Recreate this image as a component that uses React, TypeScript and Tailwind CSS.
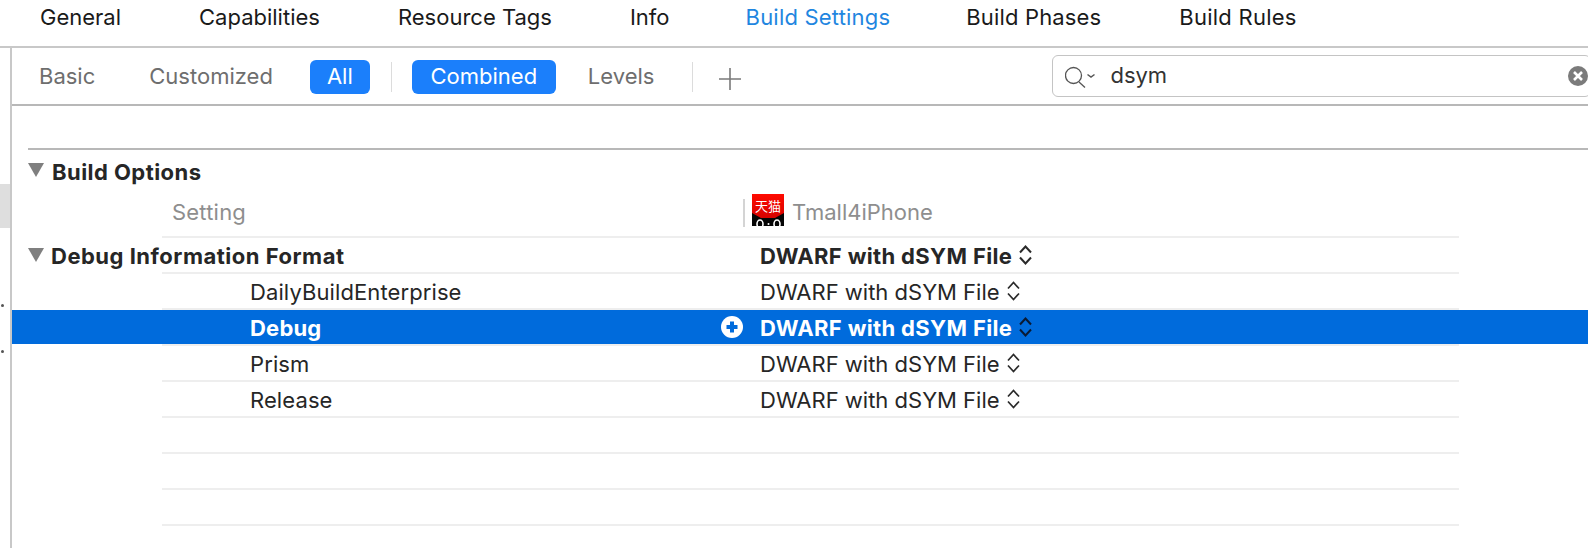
const font = { fontFamily: 'Inter, "Noto Sans CJK SC", sans-serif' };

function Chevrons({ white = false, bold = false }: { white?: boolean; bold?: boolean }) {
  return (
    <svg width="13" height="20" viewBox="0 0 13 20" fill="none" stroke={white ? "#0a1a33" : "#2a2a2a"} strokeWidth={bold ? 2 : 1.7} className="ml-[7px] shrink-0">
      <path d="M1 7.5 6.5 1.5 12 7.5" />
      <path d="M1 12.5 6.5 18.5 12 12.5" />
    </svg>
  );
}

function Tri() {
  return (
    <svg width="16" height="14" viewBox="0 0 16 14" className="shrink-0">
      <path d="M0 0H16L8 14Z" fill="#7f7f7f" />
    </svg>
  );
}

function Line() {
  return <div className="ml-[150px] h-[2px] w-[1297px] bg-[#eeeeee]" />;
}

function Row({ name }: { name: string }) {
  return (
    <>
      <div className="flex h-[34px] items-center text-[#262626]">
        <div className="w-[748px] pl-[238px] pt-[2px] tracking-[0.1px]">{name}</div>
        <span className="pt-[2px]">DWARF with dSYM File</span>
        <Chevrons />
      </div>
      <Line />
    </>
  );
}

export default function App() {
  return (
    <div className="flex h-[548px] w-[1588px] flex-col overflow-hidden bg-white text-[22px] leading-none" style={font}>
      <div className="flex h-[46px] shrink-0 items-center gap-[78px] pb-[12px] pl-[40px] text-[#1a1a1a]">
        <span>General</span>
        <span>Capabilities</span>
        <span>Resource Tags</span>
        <span>Info</span>
        <span className="-ml-[2px] -mr-[2px] tracking-[0.2px] text-[#1f86e0]">Build Settings</span>
        <span className="tracking-[0.15px]">Build Phases</span>
        <span className="tracking-[0.25px]">Build Rules</span>
      </div>
      <div className="h-[2px] shrink-0 bg-[#c8c8c8]" />
      <div className="flex min-h-0 flex-1">
        <div className="flex w-[10px] shrink-0 flex-col">
          <div className="mt-[136px] h-[44px] bg-[#dedede]" />
          <div className="ml-[1px] mt-[76px] h-[3px] w-[3px] rounded-full bg-[#555555]" />
          <div className="ml-[1px] mt-[43px] h-[3px] w-[3px] rounded-full bg-[#555555]" />
        </div>
        <div className="w-[2px] shrink-0 bg-[#c8c8c8]" />
        <div className="min-w-0 flex-1">
          <div className="flex h-[58px] items-center border-b-2 border-[#b8b8b8] pt-[2px] text-[#6e6e6e]">
            <span className="mb-[2px] ml-[27px] shrink-0">Basic</span>
            <span className="mb-[2px] ml-[54px] shrink-0">Customized</span>
            <span className="ml-[37px] flex h-[34px] w-[60px] shrink-0 items-center justify-center rounded-[6px] bg-[#1b7ffb] pb-[2px] text-white">All</span>
            <div className="ml-[21px] h-[30px] w-[1px] shrink-0 bg-[#dcdcdc]" />
            <span className="ml-[20px] flex h-[34px] w-[144px] shrink-0 items-center justify-center rounded-[6px] bg-[#1b7ffb] pb-[2px] text-white">Combined</span>
            <span className="mb-[2px] ml-[32px] shrink-0">Levels</span>
            <div className="ml-[38px] h-[30px] w-[1px] shrink-0 bg-[#dcdcdc]" />
            <svg width="24" height="24" viewBox="0 0 24 24" stroke="#7a7a7a" strokeWidth="1.6" className="ml-[25px] mt-[4px] shrink-0">
              <path d="M12 1V23M1 12H23" />
            </svg>
            <div className="mb-[2px] ml-[310px] flex h-[42px] w-[539px] shrink-0 items-center rounded-[6px] border border-[#c4c4c4] pl-[12px] text-[#333333]">
              <svg width="30" height="24" viewBox="0 0 30 24" fill="none" stroke="#555555" strokeWidth="1.3" className="shrink-0">
                <circle cx="8.5" cy="11.5" r="8" />
                <path d="M14 18 20 23.5" />
                <path d="M22.5 10.5 26 13 29.5 10.5" strokeWidth="1.5" />
              </svg>
              <span className="ml-[15px] pb-[2px]">dsym</span>
              <svg width="20" height="20" viewBox="0 0 20 20" className="ml-auto mr-[2px] shrink-0">
                <circle cx="10" cy="10" r="10" fill="#7b7b7b" />
                <path d="M6 6 14 14M14 6 6 14" stroke="white" strokeWidth="2.6" />
              </svg>
            </div>
          </div>
          <div className="ml-[16px] mt-[42px] h-[2px] bg-[#b8b8b8]" />
          <div className="flex h-[40px] items-center pt-[4px] font-bold tracking-[0.45px] text-[#262626]">
            <div className="mb-[4px] ml-[16px]"><Tri /></div>
            <span className="ml-[8px]">Build Options</span>
          </div>
          <div className="flex h-[46px] items-center text-[#8e8e8e]">
            <div className="w-[731px] pb-[2px] pl-[160px] tracking-[0.2px]">Setting</div>
            <div className="h-[28px] w-[2px] bg-[#d4d4d4]" />
            <svg width="32" height="32" viewBox="0 0 32 32" className="mb-[6px] ml-[7px] shrink-0">
              <defs>
                <linearGradient id="tm" x1="0" y1="0" x2="0" y2="1">
                  <stop offset="0" stopColor="#ff0a00" />
                  <stop offset="1" stopColor="#c80000" />
                </linearGradient>
              </defs>
              <rect width="32" height="32" fill="url(#tm)" />
              <path d="M0 32V19L9 24H23L32 19V32Z" fill="#050505" />
              <text x="16" y="16.5" textAnchor="middle" fontSize="13" fill="white" style={font}>天猫</text>
              <ellipse cx="8" cy="30" rx="3" ry="4" fill="none" stroke="white" strokeWidth="1.6" />
              <ellipse cx="25" cy="30" rx="3" ry="4" fill="none" stroke="white" strokeWidth="1.6" />
              <circle cx="16.5" cy="30" r="1" fill="white" />
            </svg>
            <span className="ml-[8px] pb-[2px]">Tmall4iPhone</span>
          </div>
          <Line />
          <div className="flex h-[34px] items-center font-bold text-[#262626]">
            <div className="flex w-[748px] items-center">
              <div className="ml-[16px]"><Tri /></div>
              <span className="ml-[7px] pt-[2px] tracking-[0.5px]">Debug Information Format</span>
            </div>
            <span className="pt-[2px] tracking-[0.35px]">DWARF with dSYM File</span>
            <Chevrons bold />
          </div>
          <Line />
          <Row name="DailyBuildEnterprise" />
          <div className="flex h-[34px] items-center bg-[#006bdc] font-bold text-white">
            <div className="flex w-[748px] items-center justify-between pl-[238px] pr-[17px]">
              <span className="pt-[2px] tracking-[0.2px]">Debug</span>
              <svg width="22" height="22" viewBox="0 0 22 22">
                <circle cx="11" cy="11" r="11" fill="white" />
                <path d="M11 5.5V16.5M5.5 11H16.5" stroke="#006bdc" strokeWidth="4" />
              </svg>
            </div>
            <span className="pt-[2px] tracking-[0.35px]">DWARF with dSYM File</span>
            <Chevrons white bold />
          </div>
          <Line />
          <Row name="Prism" />
          <Row name="Release" />
          <div className="h-[34px]" />
          <Line />
          <div className="h-[34px]" />
          <Line />
          <div className="h-[34px]" />
          <Line />
        </div>
      </div>
    </div>
  );
}
